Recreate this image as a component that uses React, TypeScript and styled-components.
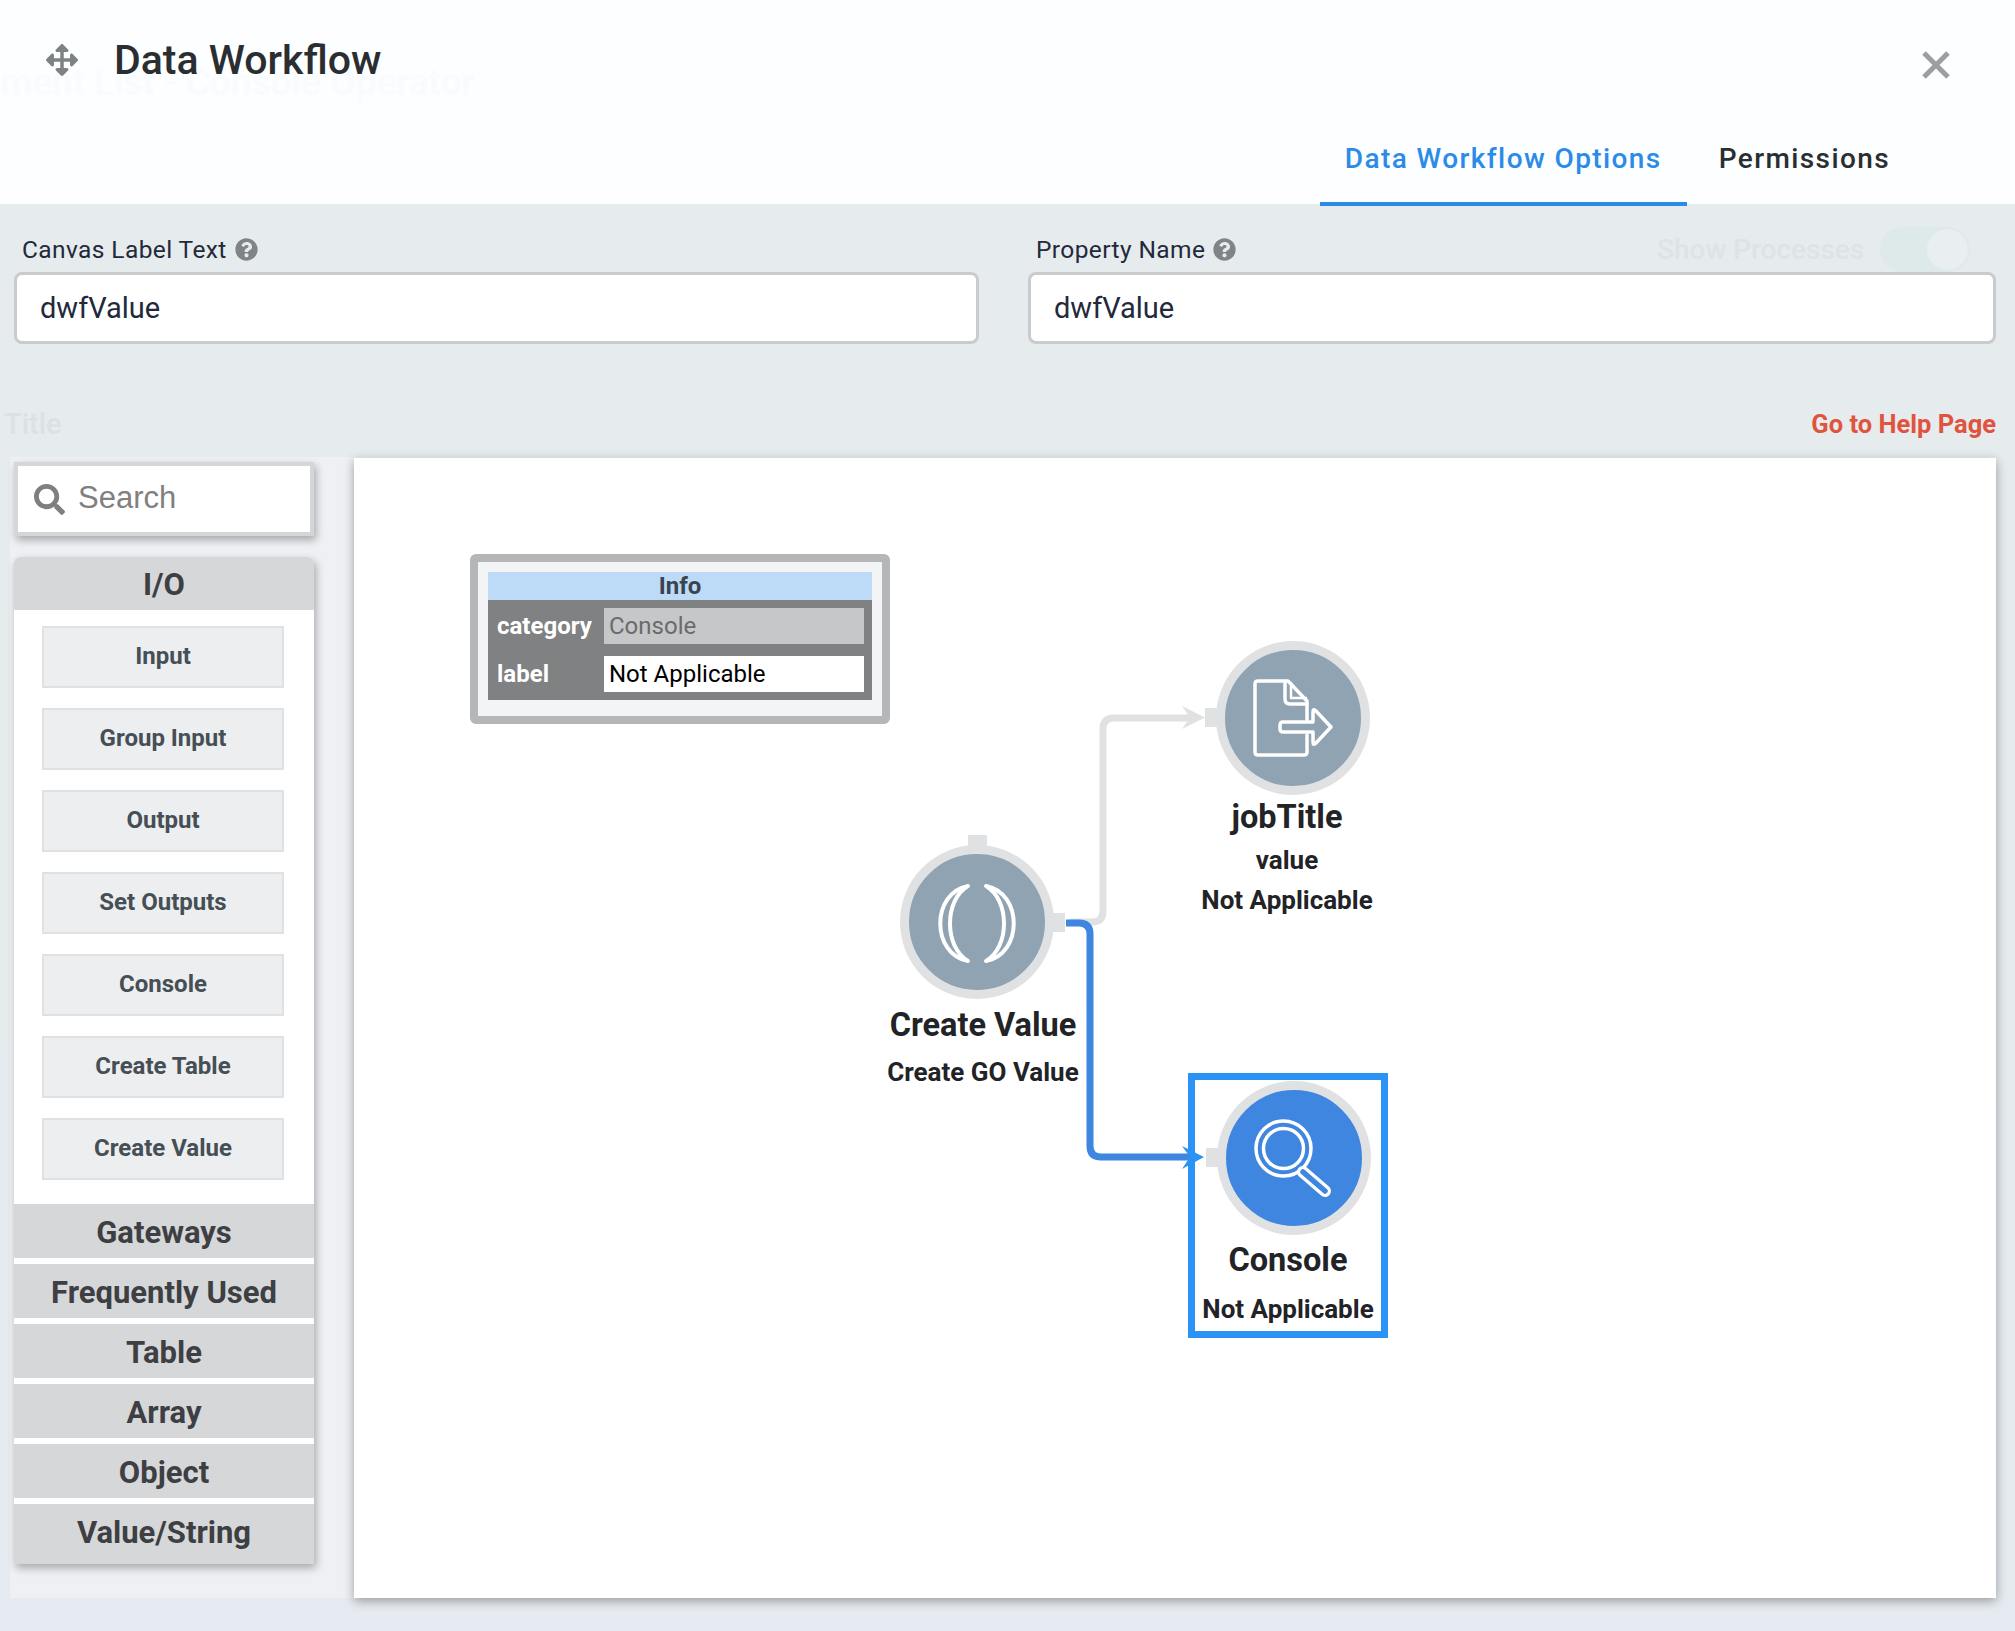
import React from "react";
import styled, { createGlobalStyle } from "styled-components";
import { FaArrowsAlt, FaQuestionCircle, FaSearch } from "react-icons/fa";

const GlobalStyle = createGlobalStyle`
  html, body {
    margin: 0;
    padding: 0;
    background: #e6ebee;
  }
  body {
    font-family: Roboto, "Liberation Sans", sans-serif;
    overflow: hidden;
  }
`;

const Page = styled.div`
  position: relative;
  width: 2015px;
  height: 1631px;
  display: flex;
  flex-direction: column;
  background: linear-gradient(#e6ebee 60%, #e6ebf1);
  overflow: hidden;
`;

/* things behind the translucent modal */
const Ghost = styled.span<{ $x: number; $y: number; $size: number; $color: string }>`
  position: absolute;
  left: ${({ $x }) => $x}px;
  top: ${({ $y }) => $y}px;
  font-size: ${({ $size }) => $size}px;
  font-weight: 500;
  line-height: 1;
  color: ${({ $color }) => $color};
  white-space: nowrap;
`;

const GhostToggle = styled.div`
  position: absolute;
  left: 1880px;
  top: 227px;
  width: 90px;
  height: 45px;
  border-radius: 23px;
  background: #deeae9;
  &::after {
    content: "";
    position: absolute;
    right: 2px;
    top: 2px;
    width: 41px;
    height: 41px;
    border-radius: 50%;
    background: #e9eef0;
  }
`;

const Header = styled.header`
  position: relative;
  height: 204px;
  flex: none;
  display: flex;
  justify-content: space-between;
  background: #fcfeff;
  box-sizing: border-box;
`;

const TitleGroup = styled.div`
  position: relative;
  display: flex;
  align-items: center;
  gap: 36px;
  height: 120px;
  padding-left: 46px;
  color: #7d8285;
  svg {
    width: 32px;
    height: 32px;
  }
`;

const Title = styled.h1`
  margin: 0;
  font-size: 41px;
  line-height: 44px;
  font-weight: 500;
  color: #2b2e31;
`;

const HeaderRight = styled.div`
  display: flex;
  flex-direction: column;
  align-items: flex-end;
  justify-content: space-between;
`;

const CloseButton = styled.button`
  display: block;
  margin: 50px 64px 0 0;
  padding: 0;
  width: 30px;
  height: 30px;
  border: 0;
  background: none;
  color: #9a9fa2;
`;

const Tabs = styled.nav`
  display: flex;
  padding-right: 93px;
  margin-bottom: -2px;
`;

const Tab = styled.div<{ $active?: boolean }>`
  padding: 0 ${({ $active }) => ($active ? "25px" : "32px")};
  height: 66px;
  box-sizing: border-box;
  line-height: 38px;
  font-size: 28px;
  font-weight: 500;
  letter-spacing: 1.4px;
  color: ${({ $active }) => ($active ? "#2b8be8" : "#2b2e31")};
  border-bottom: 4px solid ${({ $active }) => ($active ? "#2b8be8" : "transparent")};
`;

const FormRow = styled.section`
  position: relative;
  display: grid;
  grid-template-columns: 965px 968px;
  column-gap: 49px;
  padding: 30px 0 0 14px;
`;

const Field = styled.div``;

const FieldLabel = styled.label`
  display: flex;
  align-items: center;
  gap: 8px;
  height: 30px;
  padding-left: 8px;
  font-size: 24.5px;
  letter-spacing: 0.4px;
  color: #23293a;
  svg {
    width: 23px;
    height: 23px;
    color: #808488;
  }
`;

const TextValue = styled.div`
  margin-top: 8px;
  height: 72px;
  box-sizing: border-box;
  padding-left: 23px;
  line-height: 67px;
  font-size: 29px;
  color: #23293a;
  background: #fff;
  border: 3px solid #c9cbcd;
  border-radius: 8px;
`;

const HelpRow = styled.div`
  position: relative;
  display: flex;
  justify-content: flex-end;
  padding: 65px 19px 0 0;
`;

const HelpLink = styled.a`
  font-size: 25.5px;
  line-height: 30px;
  font-weight: 700;
  color: #e0533d;
`;

const Main = styled.main`
  position: relative;
  flex: 1;
  display: flex;
  gap: 40px;
  margin: 18px 19px 33px 10px;
  padding: 1px 0 0 4px;
  background: #eef0f3;
`;

const SideColumn = styled.aside`
  width: 300px;
  flex: none;
  padding-top: 4px;
`;

const SearchBox = styled.div`
  display: flex;
  align-items: center;
  gap: 13px;
  height: 74px;
  box-sizing: border-box;
  padding: 0 0 2px 16px;
  background: #fff;
  border: 4px solid #d5d6d8;
  box-shadow: 2px 4px 8px rgba(0, 0, 0, 0.3);
  font-family: "Liberation Sans", Arial, sans-serif;
  font-size: 31px;
  color: #808080;
  svg {
    width: 31px;
    height: 31px;
    color: #7f7f7f;
    margin-top: 3px;
  }
`;

const Palette = styled.div`
  margin-top: 21px;
  background: #fff;
  border-radius: 6px 6px 0 0;
  box-shadow: 2px 4px 8px rgba(0, 0, 0, 0.3);
`;

const PaletteHead = styled.div<{ $top?: boolean; $last?: boolean }>`
  height: ${({ $top, $last }) => ($top ? 53 : $last ? 60 : 54)}px;
  margin-bottom: ${({ $last, $top }) => ($last || $top ? 0 : 6)}px;
  line-height: ${({ $top }) => ($top ? 56 : 58)}px;
  text-align: center;
  font-size: 31px;
  font-weight: 700;
  color: #3d3f43;
  background: #d6d7d9;
  border-radius: ${({ $top }) => ($top ? "6px 6px 0 0" : "0")};
`;

const PaletteItems = styled.div`
  display: flex;
  flex-direction: column;
  gap: 20px;
  padding: 16px 30px 24px 28px;
`;

const PaletteItem = styled.div`
  height: 62px;
  box-sizing: border-box;
  line-height: 57px;
  text-align: center;
  font-size: 24px;
  font-weight: 700;
  color: #454f55;
  background: #eceef0;
  border: 2px solid #dfe2e4;
`;

const Canvas = styled.div`
  position: relative;
  flex: 1;
  background: #fff;
  box-shadow: 0 3px 10px rgba(0, 0, 0, 0.35);
`;

const WireLayer = styled.svg`
  position: absolute;
  left: 0;
  top: 0;
  width: 100%;
  height: 100%;
  pointer-events: none;
`;

const InfoPanel = styled.div`
  position: absolute;
  left: 116px;
  top: 96px;
  width: 420px;
  height: 170px;
  box-sizing: border-box;
  padding: 10px 10px 16px;
  background: #f2f4f6;
  border: 8px solid #b5b6b7;
  border-radius: 6px;
`;

const InfoTitle = styled.div`
  height: 28px;
  line-height: 29px;
  text-align: center;
  font-size: 24px;
  font-weight: 700;
  color: #3a4450;
  background: #bddbf6;
`;

const InfoBody = styled.div`
  display: grid;
  grid-template-columns: 116px 260px;
  grid-auto-rows: 36px;
  row-gap: 12px;
  height: 100px;
  box-sizing: border-box;
  padding-top: 8px;
  background: #808183;
`;

const InfoKey = styled.div`
  padding-left: 9px;
  line-height: 36px;
  font-size: 24px;
  font-weight: 700;
  color: #fff;
`;

const InfoValue = styled.div<{ $disabled?: boolean }>`
  padding-left: 5px;
  line-height: 36px;
  font-size: 24px;
  color: ${({ $disabled }) => ($disabled ? "#6b6b6b" : "#000")};
  background: ${({ $disabled }) => ($disabled ? "#c6c7c9" : "#fff")};
`;

const Node = styled.div<{ $x: number; $y: number; $selected?: boolean }>`
  position: absolute;
  left: ${({ $x }) => $x}px;
  top: ${({ $y }) => $y}px;
  width: 200px;
  box-sizing: border-box;
  display: flex;
  flex-direction: column;
  align-items: center;
  white-space: nowrap;
  ${({ $selected }) =>
    $selected &&
    `
    height: 265px;
    padding-top: 1px;
    border: 7px solid #2b93f5;
  `}
`;

const NodeCircle = styled.div<{ $shift: number; $fill: string }>`
  position: relative;
  flex: none;
  width: 154px;
  height: 154px;
  box-sizing: border-box;
  border: 9px solid #e0e1e3;
  border-radius: 50%;
  background: ${({ $fill }) => $fill};
  transform: translateX(${({ $shift }) => $shift}px);
  svg {
    display: block;
    margin: -9px;
    width: 154px;
    height: 154px;
  }
`;

const Port = styled.span<{ $side: "left" | "right" | "top" }>`
  position: absolute;
  background: #e0e1e3;
  ${({ $side }) =>
    $side === "left"
      ? "left: -20px; top: 58px; width: 14px; height: 19px;"
      : $side === "right"
        ? "right: -20px; top: 59px; width: 14px; height: 19px;"
        : "left: 59px; top: -19px; width: 19px; height: 14px;"}
`;

const NodeName = styled.div<{ $gap?: number }>`
  margin-top: ${({ $gap }) => $gap ?? 0}px;
  line-height: 46px;
  font-size: 32.5px;
  font-weight: 700;
  color: #212326;
`;

const NodeSub = styled.div<{ $gap?: number }>`
  margin-top: ${({ $gap }) => $gap ?? 0}px;
  line-height: 40px;
  font-size: 26px;
  font-weight: 700;
  color: #212326;
`;

const iconStroke = {
  fill: "none",
  stroke: "#fff",
  strokeWidth: 3.5,
  strokeLinecap: "round",
  strokeLinejoin: "round",
} as const;

const CloseIcon = () => (
  <svg viewBox="0 0 30 30" width="30" height="30" fill="none" stroke="currentColor" strokeWidth="5">
    <path d="M3 3 L27 27 M27 3 L3 27" />
  </svg>
);

const FileOutIcon = () => (
  <svg viewBox="0 0 154 154" {...iconStroke}>
    <path d="M91 79 V60 L72 40 H42 Q39 40 39 43 V111 Q39 114 42 114 H88 Q91 114 91 111 V94" />
    <path d="M69 42 V58 Q69 63 74 63 H91" />
    <path d="M75 42 V57 H90" strokeWidth="2.5" />
    <path d="M97 81 H67 Q64 81 64 84 V88 Q64 91 67 91 H97 V101 Q97 105 100 102 L115 86 L100 70 Q97 67 97 71 Z" />
  </svg>
);

const ParensIcon = () => (
  <svg viewBox="0 0 154 154" {...iconStroke} strokeWidth="4">
    <path d="M68 41 C31 48 31 109 68 116 C44 102 44 55 68 41 Z" />
    <path d="M86 41 C123 48 123 109 86 116 C110 102 110 55 86 41 Z" />
  </svg>
);

const ConsoleIcon = () => (
  <svg viewBox="0 0 154 154" {...iconStroke}>
    <circle cx="66.5" cy="67.5" r="27.5" />
    <circle cx="66.5" cy="67.5" r="20" />
    <path d="M86 91 L108 110" strokeWidth="12" />
    <path d="M86 91 L108 110" strokeWidth="5.5" stroke="#3f86e0" />
  </svg>
);

const paletteItems = ["Input", "Group Input", "Output", "Set Outputs", "Console", "Create Table", "Create Value"];
const paletteGroups = ["Gateways", "Frequently Used", "Table", "Array", "Object"];

export default function App() {
  return (
    <Page>
      <GlobalStyle />
      <Header>
        <Ghost $x={0} $y={64} $size={37} $color="#f9fbfc">
          ment List - Console Operator
        </Ghost>
        <TitleGroup>
          <FaArrowsAlt />
          <Title>Data Workflow</Title>
        </TitleGroup>
        <HeaderRight>
          <CloseButton aria-label="Close">
            <CloseIcon />
          </CloseButton>
          <Tabs>
            <Tab $active>Data Workflow Options</Tab>
            <Tab>Permissions</Tab>
          </Tabs>
        </HeaderRight>
      </Header>

      <Ghost $x={1657} $y={236} $size={28} $color="#dde4e6">
        Show Processes
      </Ghost>
      <GhostToggle />
      <Ghost $x={4} $y={410} $size={29} $color="#dbe1e4">
        Title
      </Ghost>

      <FormRow>
        <Field>
          <FieldLabel>
            Canvas Label Text <FaQuestionCircle />
          </FieldLabel>
          <TextValue>dwfValue</TextValue>
        </Field>
        <Field>
          <FieldLabel>
            Property Name <FaQuestionCircle />
          </FieldLabel>
          <TextValue>dwfValue</TextValue>
        </Field>
      </FormRow>

      <HelpRow>
        <HelpLink>Go to Help Page</HelpLink>
      </HelpRow>

      <Main>
        <SideColumn>
          <SearchBox>
            <FaSearch />
            Search
          </SearchBox>
          <Palette>
            <PaletteHead $top>I/O</PaletteHead>
            <PaletteItems>
              {paletteItems.map((item) => (
                <PaletteItem key={item}>{item}</PaletteItem>
              ))}
            </PaletteItems>
            {paletteGroups.map((group) => (
              <PaletteHead key={group}>{group}</PaletteHead>
            ))}
            <PaletteHead $last>Value/String</PaletteHead>
          </Palette>
        </SideColumn>

        <Canvas>
          <InfoPanel>
            <InfoTitle>Info</InfoTitle>
            <InfoBody>
              <InfoKey>category</InfoKey>
              <InfoValue $disabled>Console</InfoValue>
              <InfoKey>label</InfoKey>
              <InfoValue>Not Applicable</InfoValue>
            </InfoBody>
          </InfoPanel>

          <Node $x={833} $y={183}>
            <NodeCircle $shift={6} $fill="#8fa3b3">
              <Port $side="left" />
              <FileOutIcon />
            </NodeCircle>
            <NodeName $gap={-1}>jobTitle</NodeName>
            <NodeSub>value</NodeSub>
            <NodeSub>Not Applicable</NodeSub>
          </Node>

          <Node $x={529} $y={387}>
            <NodeCircle $shift={-6} $fill="#8fa3b3">
              <Port $side="top" />
              <Port $side="right" />
              <ParensIcon />
            </NodeCircle>
            <NodeName $gap={3}>Create Value</NodeName>
            <NodeSub $gap={4}>Create GO Value</NodeSub>
          </Node>

          <Node $x={834} $y={615} $selected>
            <NodeCircle $shift={6} $fill="#3f86e0">
              <Port $side="left" />
              <ConsoleIcon />
            </NodeCircle>
            <NodeName $gap={2}>Console</NodeName>
            <NodeSub $gap={6}>Not Applicable</NodeSub>
          </Node>

          <WireLayer viewBox="354 458 1642 1140" fill="none">
            <path d="M1070 922 H1092 Q1103 922 1103 911 V729 Q1103 718 1114 718 H1195" stroke="#e0e1e3" strokeWidth="7" />
            <path d="M1182 706 L1205 717.5 L1182 729 L1190 717.5 Z" fill="#e0e1e3" />
            <path d="M1066 923 H1079 Q1090 923 1090 934 V1146 Q1090 1157 1101 1157 H1195" stroke="#3f86e0" strokeWidth="7" />
            <path d="M1182 1146 L1204 1157 L1182 1169 L1190 1157 Z" fill="#2b93f5" />
          </WireLayer>
        </Canvas>
      </Main>
    </Page>
  );
}
